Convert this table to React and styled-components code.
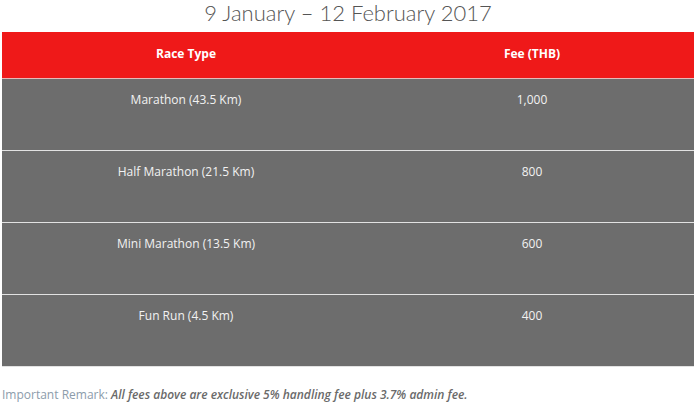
import React from "react";
import styled, { createGlobalStyle } from "styled-components";

const Global = createGlobalStyle`
  html, body { margin: 0; padding: 0; background: #fff; }
  body { font-family: "Open Sans", "Liberation Sans", sans-serif; }
`;

const Page = styled.div`
  width: 696px;
  padding: 0 2px;
  box-sizing: border-box;
`;

const Title = styled.h2`
  margin: 0;
  height: 32px;
  font-family: "Lato", "Open Sans", sans-serif;
  font-weight: 300;
  font-size: 22px;
  line-height: 25px;
  color: #555;
  text-align: center;
`;

const Table = styled.table`
  width: 100%;
  border-collapse: collapse;
  table-layout: fixed;
`;

const HeadCell = styled.th`
  background: #ef1919;
  color: #fff;
  font-weight: 700;
  font-size: 12px;
  height: 46px;
  padding: 0 0 3px;
  box-sizing: border-box;
  text-align: center;
  vertical-align: middle;
  border-bottom: 1px solid #e6b8b8;
  width: ${(p) => p.$w || "auto"};
`;

const Row = styled.tr`
  background: #6d6d6d;
  border-bottom: 1px solid #e2e2e2;
`;

const Cell = styled.td`
  height: 72px;
  padding: 12px 0 0;
  box-sizing: border-box;
  vertical-align: top;
  text-align: center;
  color: #f2f2f2;
  font-size: 12px;
  line-height: 18px;
`;

const Remark = styled.p`
  margin: 20px 0 0;
  font-size: 12px;
  line-height: 16px;
  color: #8c9cab;
`;

const RemarkText = styled.em`
  color: #6a6a6a;
  font-weight: 600;
`;

const rows = [
  ["Marathon (43.5 Km)", "1,000"],
  ["Half Marathon (21.5 Km)", "800"],
  ["Mini Marathon (13.5 Km)", "600"],
  ["Fun Run (4.5 Km)", "400"],
];

export default function App() {
  return (
    <Page>
      <Global />
      <Title>9 January – 12 February 2017</Title>
      <Table>
        <thead>
          <tr>
            <HeadCell $w="368px">Race Type</HeadCell>
            <HeadCell>Fee (THB)</HeadCell>
          </tr>
        </thead>
        <tbody>
          {rows.map(([name, fee]) => (
            <Row key={name}>
              <Cell>{name}</Cell>
              <Cell>{fee}</Cell>
            </Row>
          ))}
        </tbody>
      </Table>
      <Remark>
        Important Remark: <RemarkText>All fees above are exclusive 5% handling fee plus 3.7% admin fee.</RemarkText>
      </Remark>
    </Page>
  );
}
